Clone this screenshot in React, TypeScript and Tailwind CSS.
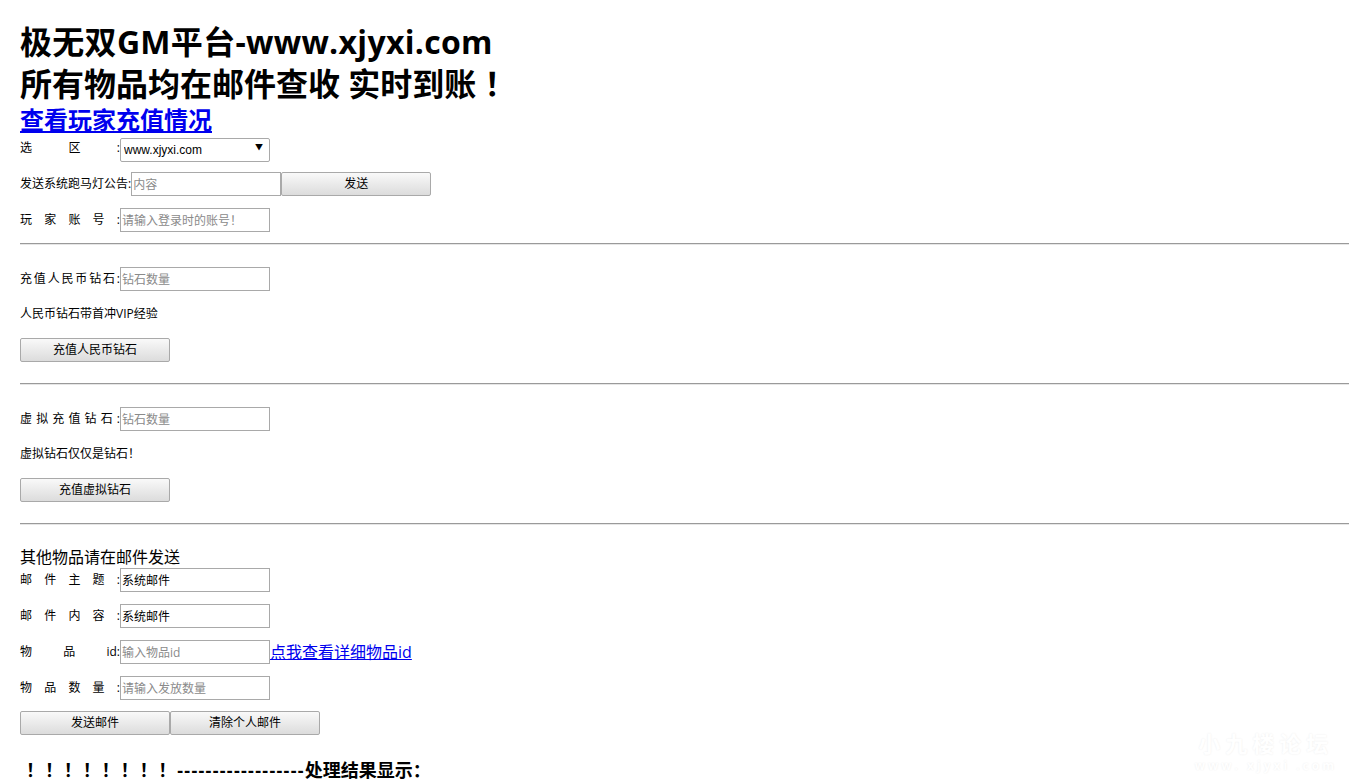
import React from 'react';

const font = "font-['Open_Sans','Noto_Sans_CJK_SC',sans-serif]";

function Label({ parts }: { parts: string[] }) {
  return (
    <span className="flex w-[100px] shrink-0 justify-between text-[12px] leading-[24px]">
      {parts.map((p, i) => (
        <span key={i}>{p}</span>
      ))}
    </span>
  );
}

function TextInput({ placeholder, value }: { placeholder: string; value?: string }) {
  return (
    <input
      type="text"
      placeholder={placeholder}
      defaultValue={value}
      className={`h-[24px] w-[150px] border border-[#a9a9a9] bg-white px-[1px] text-[12px] text-black outline-none placeholder:text-[#8a8a8a] ${font}`}
    />
  );
}

function GrayButton({ children }: { children: React.ReactNode }) {
  return (
    <button
      className={`h-[24px] w-[150px] rounded-[2px] border border-[#a9a9a9] bg-gradient-to-b from-[#f9f9f9] to-[#dcdcdc] text-[12px] text-black ${font}`}
    >
      {children}
    </button>
  );
}

function Hr({ top }: { top: string }) {
  return <div className={`${top} h-[2px] border-t border-t-[#9a9a9a] border-b border-b-[#e6e6e6]`} />;
}

export default function App() {
  return (
    <div className={`relative min-h-screen overflow-hidden bg-white pl-[20px] pt-[21px] text-black ${font}`}>
      {/* Title */}
      <h1 className="text-[32px] font-bold leading-[42px]">
        <span className="tracking-[0.3px]">极无双GM平台-www.xjyxi.com</span>
        <br />
        所有物品均在邮件查收 实时到账<span className="ml-[8px]">！</span>
      </h1>
      <a href="#" className="block w-fit text-[24px] font-bold leading-[30px] text-[#0000ee] underline">
        查看玩家充值情况
      </a>

      {/* Server / notice / account */}
      <div className="mt-[1px] flex h-[24px] items-center">
        <Label parts={['选', '区', ':']} />
        <div className="relative h-[24px] w-[150px]">
          <select className="h-[24px] w-[150px] appearance-none rounded-[2px] border border-[#a9a9a9] bg-white pl-[3px] font-['Liberation_Sans',sans-serif] text-[12px] outline-none">
            <option>www.xjyxi.com</option>
          </select>
          <span className="pointer-events-none absolute right-[7px] top-[6px] text-[8px] leading-[10px]">▼</span>
        </div>
      </div>
      <div className="mt-[12px] flex h-[24px] items-center">
        <span className="text-[12px] leading-[24px]">发送系统跑马灯公告:</span>
        <TextInput placeholder="内容" />
        <GrayButton>发送</GrayButton>
      </div>
      <div className="mt-[12px] flex h-[24px] items-center">
        <Label parts={['玩', '家', '账', '号', ':']} />
        <TextInput placeholder="请输入登录时的账号！" />
      </div>

      <Hr top="mt-[11px]" />

      {/* RMB diamonds */}
      <div className="mt-[22px] flex h-[24px] items-center">
        <Label parts={['充', '值', '人', '民', '币', '钻', '石', ':']} />
        <TextInput placeholder="钻石数量" />
      </div>
      <p className="mt-[11px] text-[12px] leading-[24px]">人民币钻石带首冲VIP经验</p>
      <div className="mt-[12px] flex">
        <GrayButton>充值人民币钻石</GrayButton>
      </div>

      <Hr top="mt-[21px]" />

      {/* Virtual diamonds */}
      <div className="mt-[22px] flex h-[24px] items-center">
        <Label parts={['虚', '拟', '充', '值', '钻', '石', ':']} />
        <TextInput placeholder="钻石数量" />
      </div>
      <p className="mt-[11px] text-[12px] leading-[24px]">虚拟钻石仅仅是钻石！</p>
      <div className="mt-[12px] flex">
        <GrayButton>充值虚拟钻石</GrayButton>
      </div>

      <Hr top="mt-[21px]" />

      {/* Mail */}
      <p className="mt-[22px] text-[16px] leading-[20px]">其他物品请在邮件发送</p>
      <div className="mt-[1px] flex h-[24px] items-center">
        <Label parts={['邮', '件', '主', '题', ':']} />
        <TextInput placeholder="" value="系统邮件" />
      </div>
      <div className="mt-[12px] flex h-[24px] items-center">
        <Label parts={['邮', '件', '内', '容', ':']} />
        <TextInput placeholder="" value="系统邮件" />
      </div>
      <div className="mt-[12px] flex h-[24px] items-center">
        <Label parts={['物', '品', 'id:']} />
        <TextInput placeholder="输入物品id" />
        <a href="#" className="text-[16px] leading-[24px] text-[#0000ee] underline">
          点我查看详细物品id
        </a>
      </div>
      <div className="mt-[12px] flex h-[24px] items-center">
        <Label parts={['物', '品', '数', '量', ':']} />
        <TextInput placeholder="请输入发放数量" />
      </div>
      <div className="mt-[11px] flex">
        <GrayButton>发送邮件</GrayButton>
        <GrayButton>清除个人邮件</GrayButton>
      </div>

      <p className="mt-[23px] text-[18px] font-bold leading-[24px]">
        <span className="ml-[6px] tracking-[0.9px]">！！！！！！！！</span>
        <span className="tracking-[1.3px]">------------------</span>
        <span>处理结果显示：</span>
      </p>

      {/* Watermark */}
      <div className="pointer-events-none absolute bottom-[10px] right-[12px] flex flex-col items-center gap-[6px] text-white [text-shadow:0_0_2px_rgba(0,0,0,0.08)]">
        <span className="text-[22px] font-bold leading-[22px] tracking-[5px]">小九楼论坛</span>
        <span className="text-[12px] font-bold leading-[12px] tracking-[3px]">www. xjyxi .com</span>
      </div>
    </div>
  );
}
